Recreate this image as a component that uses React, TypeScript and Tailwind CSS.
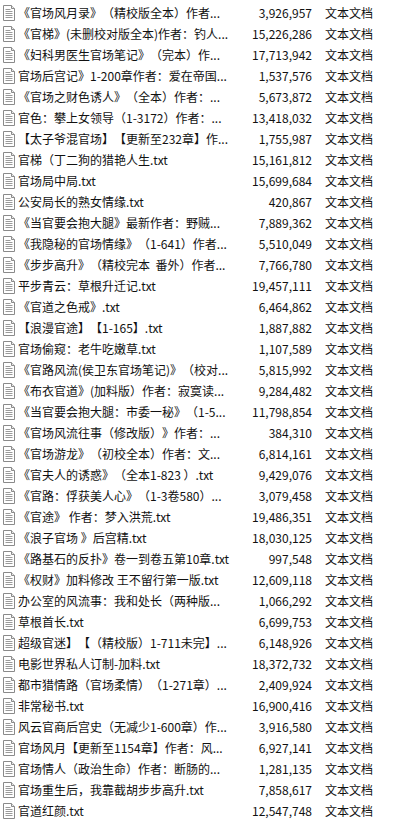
const FILES: [string, string][] = [
  ["《官场风月录》（精校版全本）作者...", "3,926,957"],
  ["《官梯》(未删校对版全本)作者：钓人...", "15,226,286"],
  ["《妇科男医生官场笔记》（完本）作...", "17,713,942"],
  ["官场后宫记》1-200章作者：爱在帝国...", "1,537,576"],
  ["《官场之财色诱人》（全本）作者：...", "5,673,872"],
  ["官色：攀上女领导（1-3172）作者：...", "13,418,032"],
  ["【太子爷混官场】【更新至232章】作...", "1,755,987"],
  ["官梯（丁二狗的猎艳人生.txt", "15,161,812"],
  ["官场局中局.txt", "15,699,684"],
  ["公安局长的熟女情缘.txt", "420,867"],
  ["《当官要会抱大腿》最新作者：野贼...", "7,889,362"],
  ["《我隐秘的官场情缘》（1-641）作者...", "5,510,049"],
  ["《步步高升》（精校完本  番外）作者...", "7,766,780"],
  ["平步青云：草根升迁记.txt", "19,457,111"],
  ["《官道之色戒》.txt", "6,464,862"],
  ["【浪漫官途】【1-165】.txt", "1,887,882"],
  ["官场偷窥：老牛吃嫩草.txt", "1,107,589"],
  ["《官路风流(侯卫东官场笔记)》（校对...", "5,815,992"],
  ["《布衣官道》(加料版）作者：寂寞读...", "9,284,482"],
  ["《当官要会抱大腿：市委一秘》（1-5...", "11,798,854"],
  ["《官场风流往事（修改版）》作者：...", "384,310"],
  ["《官场游龙》（初校全本）作者：文...", "6,814,161"],
  ["《官夫人的诱惑》（全本1-823 ）.txt", "9,429,076"],
  ["《官路：俘获美人心》（1-3卷580）...", "3,079,458"],
  ["《官途》 作者：梦入洪荒.txt", "19,486,351"],
  ["《浪子官场 》后宫精.txt", "18,030,125"],
  ["《路基石的反扑》卷一到卷五第10章.txt", "997,548"],
  ["《权财》加料修改 王不留行第一版.txt", "12,609,118"],
  ["办公室的风流事：我和处长（两种版...", "1,066,292"],
  ["草根首长.txt", "6,699,753"],
  ["超级官迷】【（精校版）1-711未完】...", "6,148,926"],
  ["电影世界私人订制-加料.txt", "18,372,732"],
  ["都市猎情路（官场柔情）（1-271章）...", "2,409,924"],
  ["非常秘书.txt", "16,900,416"],
  ["风云官商后宫史（无减少1-600章）作...", "3,916,580"],
  ["官场风月【更新至1154章】作者：风...", "6,927,141"],
  ["官场情人（政治生命）作者：断肠的...", "1,281,135"],
  ["官场重生后，我靠截胡步步高升.txt", "7,858,617"],
  ["官道红颜.txt", "12,547,748"],
];

function TextFileIcon() {
  return (
    <svg width="12" height="16" viewBox="0 0 12 16" className="shrink-0">
      <path d="M0.5 0.5H8.5L11.5 3.5V15.5H0.5Z" fill="#fff" stroke="#8a8a8a" />
      <path d="M8.5 0.5V3.5H11.5" fill="#e8e8e8" stroke="#8a8a8a" />
      <path d="M2.5 4.5H7.5M2.5 6.5H9.5M2.5 8.5H9.5M2.5 10.5H9.5M2.5 12.5H9.5" stroke="#9a9a9a" />
    </svg>
  );
}

export default function App() {
  return (
    <div
      className="w-[402px] h-[822px] overflow-hidden bg-white pt-[2px] text-[12px] text-[#111] [text-spacing-trim:space-all] [font-feature-settings:'halt'_0]"
      style={{ fontFamily: '"Noto Sans CJK SC", "Microsoft YaHei", sans-serif' }}
    >
      {FILES.map(([name, size]) => (
        <div key={name} className="flex h-[21px] items-center pl-[3px]">
          <TextFileIcon />
          <span className="ml-[3px] w-[213px] whitespace-pre overflow-hidden">{name}</span>
          <span className="w-[81px] text-right">{size}</span>
          <span className="pl-[13px]">文本文档</span>
        </div>
      ))}
    </div>
  );
}
